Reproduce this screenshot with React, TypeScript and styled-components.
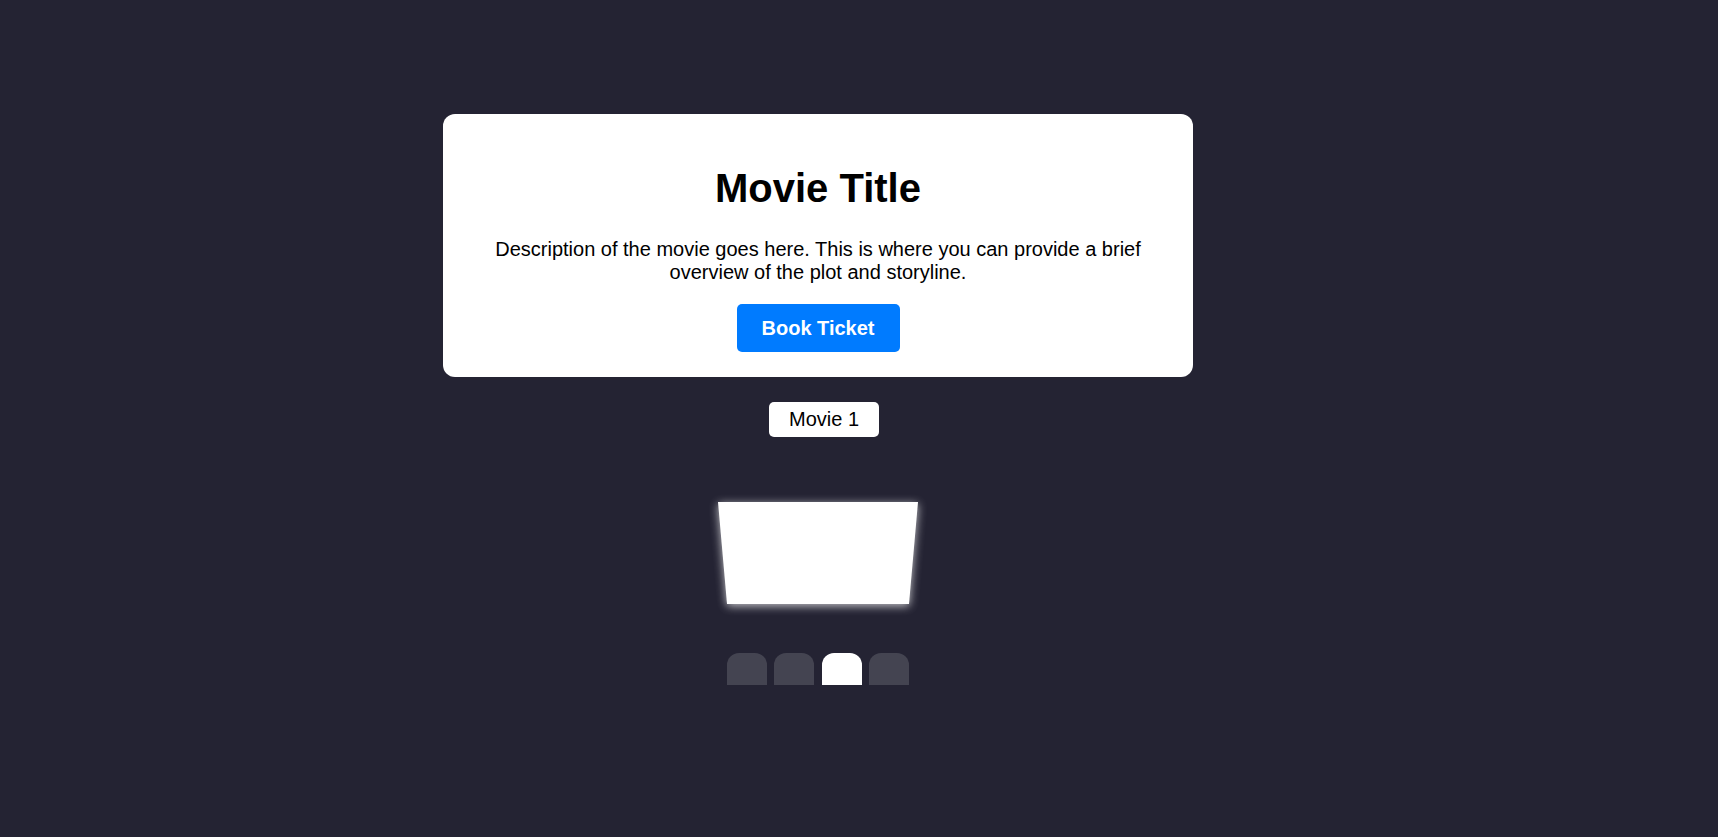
import styled, { createGlobalStyle } from 'styled-components';

const GlobalStyle = createGlobalStyle`
  html,
  body {
    margin: 0;
    padding: 0;
    background-color: #242333;
    font-family: 'Liberation Sans', Arial, sans-serif;
  }
`;

const Page = styled.div`
  width: 1636px;
  min-height: 837px;
  display: flex;
  flex-direction: column;
  align-items: center;
  padding-top: 114px;
  box-sizing: border-box;
`;

const Card = styled.div`
  width: 750px;
  box-sizing: border-box;
  background: #fff;
  border-radius: 12px;
  padding: 20px 40px 25px;
  display: flex;
  flex-direction: column;
  align-items: center;
  text-align: center;
  color: #000;

  h1 {
    font-size: 40px;
    line-height: 46px;
    font-weight: bold;
    margin: 31px 0 0;
  }

  p {
    font-size: 20px;
    line-height: 23px;
    margin: 26.5px 0 20.5px;
  }
`;

const BookButton = styled.button`
  font-family: inherit;
  font-size: 20px;
  line-height: 23px;
  font-weight: bold;
  color: #fff;
  background-color: #007bff;
  border: none;
  border-radius: 5px;
  padding: 12.5px 25px;
  cursor: pointer;
`;

const MovieList = styled.div`
  display: flex;
  gap: 10px;
  margin-top: 25px;
  padding-left: 12px;
`;

const MovieTag = styled.button<{ $active?: boolean }>`
  font-family: inherit;
  font-size: 20px;
  line-height: 23px;
  color: #000;
  background: ${(p) => (p.$active ? '#fff' : '#444451')};
  border: none;
  border-radius: 5px;
  padding: 6px 19.5px;
  cursor: pointer;
`;

const ScreenGlow = styled.div`
  margin-top: 65px;
  filter: drop-shadow(0 2px 5px rgba(255, 255, 255, 0.75));
`;

const Screen = styled.div`
  width: 200px;
  height: 102px;
  background: #fff;
  clip-path: polygon(0 0, 100% 0, 95.5% 100%, 4.5% 100%);
`;

const SeatRow = styled.div`
  display: flex;
  gap: 7.33px;
  margin-top: 49px;
`;

const Seat = styled.div<{ $selected?: boolean }>`
  width: 40px;
  height: 32px;
  background-color: ${(p) => (p.$selected ? '#fff' : '#444451')};
  border-top-left-radius: 12px;
  border-top-right-radius: 12px;
`;

const seats = [false, false, true, false];

export default function App() {
  return (
    <>
      <GlobalStyle />
      <Page>
        <Card>
          <h1>Movie Title</h1>
          <p>
            Description of the movie goes here. This is where you can provide a
            brief overview of the plot and storyline.
          </p>
          <BookButton>Book Ticket</BookButton>
        </Card>
        <MovieList>
          <MovieTag $active>Movie 1</MovieTag>
        </MovieList>
        <ScreenGlow>
          <Screen />
        </ScreenGlow>
        <SeatRow>
          {seats.map((s, i) => (
            <Seat key={i} $selected={s} />
          ))}
        </SeatRow>
      </Page>
    </>
  );
}
